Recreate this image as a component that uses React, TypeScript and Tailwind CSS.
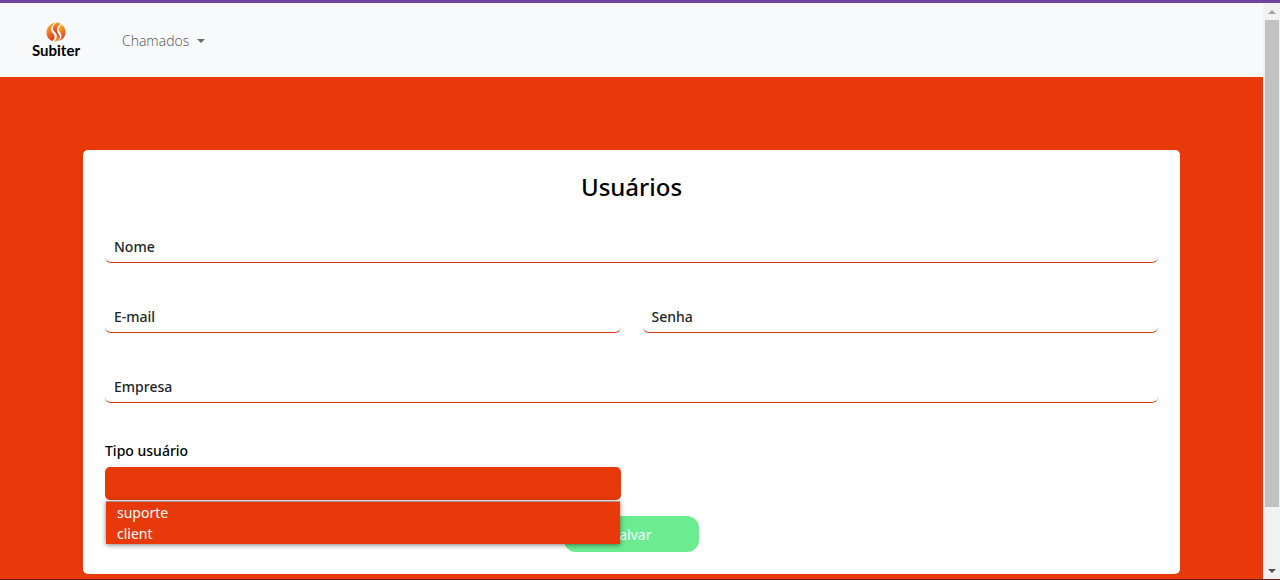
import { useState } from "react";

const lineField =
  "block h-8 w-full rounded-md border-b border-[#d2381c] bg-white px-[9px] pb-px text-sm font-medium text-[#212529] outline-none placeholder:text-[#212529] placeholder:opacity-100";

function Field({ label, type = "text" }: { label: string; type?: string }) {
  return <input type={type} aria-label={label} placeholder={label} className={lineField} />;
}

function Logo() {
  return (
    <a href="#" className="flex w-[50px] flex-col items-center">
      <svg viewBox="0 0 40 40" className="h-5 w-5" aria-hidden="true">
        <defs>
          <linearGradient id="flame" x1="0" y1="0" x2="0.4" y2="1">
            <stop offset="0" stopColor="#fbc52c" />
            <stop offset="0.55" stopColor="#ee7a22" />
            <stop offset="1" stopColor="#dd3c20" />
          </linearGradient>
          <linearGradient id="ember" x1="0" y1="0" x2="0" y2="1">
            <stop offset="0" stopColor="#f39a28" />
            <stop offset="0.5" stopColor="#dc3f20" />
            <stop offset="1" stopColor="#f4a32a" />
          </linearGradient>
        </defs>
        <path d="M20 1C8 3 1 11 1 21C1 29 6 36 13 38C18 33 19 28 14 23C8 17 9 8 20 1Z" fill="url(#flame)" />
        <path d="M22 1C12 8 12 15 18 20C24 26 22 34 16 39C26 40 31 32 26 25C20 18 20 10 29 4C27 2 25 1 22 1Z" fill="url(#ember)" />
        <path d="M31 5C24 11 24 16 29 22C33 28 30 34 26 38C34 35 39 29 39 20C39 14 36 8 31 5Z" fill="url(#flame)" />
      </svg>
      <span className="font-[Lato,sans-serif] text-[15px] leading-4 font-bold text-black">Subiter</span>
    </a>
  );
}

function UserTypeSelect() {
  const [value, setValue] = useState("");
  const options = ["suporte", "client"];
  return (
    <div className="relative">
      <select
        id="tipo"
        value={value}
        onChange={(e) => setValue(e.target.value)}
        className="block h-[33px] w-full appearance-none rounded-[5px] bg-[#e8390b] px-3 text-sm text-white outline-none"
      >
        <option value=""></option>
        {options.map((o) => (
          <option key={o}>{o}</option>
        ))}
      </select>
      <ul
        role="listbox"
        aria-label="Tipo usuário"
        className="absolute inset-x-0 top-full z-10 mx-px mt-px border-t border-[#a9928c] bg-[#e8390b] text-sm text-white shadow-[0_1px_5px_rgba(0,0,0,0.5)]"
      >
        {options.map((o) => (
          <li key={o} role="option" aria-selected={value === o} onClick={() => setValue(o)} className="h-[21px] px-[11px] leading-[22px]">
            {o}
          </li>
        ))}
      </ul>
    </div>
  );
}

function ScrollRail() {
  return (
    <div aria-hidden="true" className="flex w-[17px] shrink-0 flex-col items-center bg-[#f1f1f1]">
      <div className="flex h-[17px] items-center">
        <svg viewBox="0 0 8 4" className="h-1 w-2">
          <path d="M0 4L4 0L8 4Z" fill="#a3a3a3" />
        </svg>
      </div>
      <div className="w-[14px] grow-[487] bg-[#c1c1c1]" />
      <div className="grow-[56]" />
      <div className="flex h-4 items-center">
        <svg viewBox="0 0 8 4" className="h-1 w-2">
          <path d="M0 0L4 4L8 0Z" fill="#505050" />
        </svg>
      </div>
    </div>
  );
}

export default function App() {
  return (
    <div className="flex min-h-screen flex-col border-t-[3px] border-b border-t-[#6f42a0] border-b-[#6b210f] bg-[#e8390b] font-['Noto_Sans','Open_Sans',sans-serif]">
      <div className="flex grow">
        <div className="min-w-0 grow">
          <nav className="flex h-[74px] items-center bg-[#f8f9fb] px-[31px]">
            <Logo />
            <button type="button" className="ml-[41px] flex items-center gap-2 pt-px font-['Open_Sans',sans-serif] text-sm font-light text-[#505152]">
              Chamados
              <svg viewBox="0 0 8 4" className="h-1 w-2" aria-hidden="true">
                <path d="M0 0H8L4 4Z" fill="#6c6d6e" />
              </svg>
            </button>
          </nav>
          <main className="px-[83px] pt-[73px] pb-[5px]">
            <form className="rounded-[5px] bg-white px-[22px] pt-[21px] pb-[22px]" onSubmit={(e) => e.preventDefault()}>
              <h1 className="text-center text-2xl leading-8 font-medium text-black">Usuários</h1>
              <div className="mt-7 grid grid-cols-2 gap-x-[22px] gap-y-[38px]">
                <div className="col-span-2">
                  <Field label="Nome" />
                </div>
                <Field label="E-mail" type="email" />
                <Field label="Senha" type="password" />
                <div className="col-span-2">
                  <Field label="Empresa" />
                </div>
                <div>
                  <label htmlFor="tipo" className="mb-1.5 block text-sm leading-5 font-medium text-black">
                    Tipo usuário
                  </label>
                  <UserTypeSelect />
                </div>
              </div>
              <div className="mt-4 flex justify-center">
                <button type="submit" className="h-9 w-[135px] rounded-xl bg-[#6bec91] pt-0.5 text-sm text-white">
                  Salvar
                </button>
              </div>
            </form>
          </main>
        </div>
        <ScrollRail />
      </div>
    </div>
  );
}
